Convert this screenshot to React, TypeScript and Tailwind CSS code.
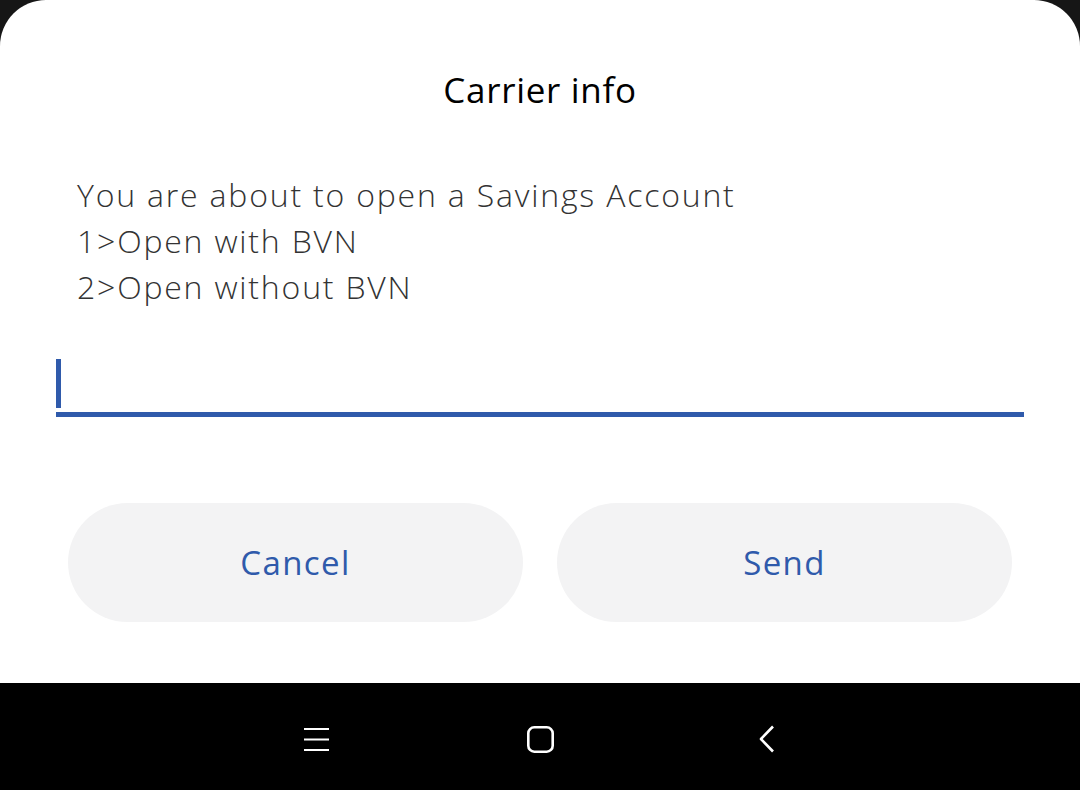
import React from "react";

export default function App() {
  return (
    <div className="w-[1080px] h-[790px] bg-[#161616] flex flex-col" style={{ fontFamily: "'Open Sans', Lato, sans-serif" }}>
      <div className="h-[683px] bg-white rounded-t-[46px] flex flex-col">
        <div className="h-[62px]" />
        <div className="h-[54px] flex items-center justify-center text-[35px] tracking-[0.7px] text-black leading-none">Carrier info</div>
        <div className="h-[56px]" />
        <div className="px-[77px] text-[32px] font-light tracking-[1.8px] leading-[46px] text-[#333333]">
          <div>You are about to open a Savings Account</div>
          <div>1&gt;Open with BVN</div>
          <div>2&gt;Open without BVN</div>
        </div>
        <div className="mx-[56px] mt-[49px] h-[58px] border-b-[5px] border-[#2f5aab] flex items-start">
          <div className="w-[5px] h-[49px] bg-[#2f5aab]" />
        </div>
        <div className="mt-[86px] px-[68px] flex gap-[34px]">
          <button className="flex-1 h-[119px] rounded-full bg-[#f3f3f4] text-[#2f5aab] text-[33px] tracking-[1.4px]">Cancel</button>
          <button className="flex-1 h-[119px] rounded-full bg-[#f3f3f4] text-[#2f5aab] text-[33px] tracking-[1.4px]">Send</button>
        </div>
      </div>
      <div className="flex-1 bg-black flex items-center">
        <div className="flex items-center pt-[5px] ml-[304px]">
          <svg width="25" height="24" viewBox="0 0 25 24">
            <path d="M0 2h25M0 12.5h25M0 23h25" stroke="white" strokeWidth="2.2" />
          </svg>
          <svg width="27" height="27" viewBox="0 0 27 27" className="ml-[198px]">
            <rect x="1.3" y="1.3" width="24.4" height="24.4" rx="6" fill="none" stroke="white" strokeWidth="2.6" />
          </svg>
          <svg width="16" height="28" viewBox="0 0 16 28" className="ml-[205px]">
            <path d="M14 1.5L2 14l12 12.5" fill="none" stroke="white" strokeWidth="2.6" strokeLinejoin="round" />
          </svg>
        </div>
      </div>
    </div>
  );
}
